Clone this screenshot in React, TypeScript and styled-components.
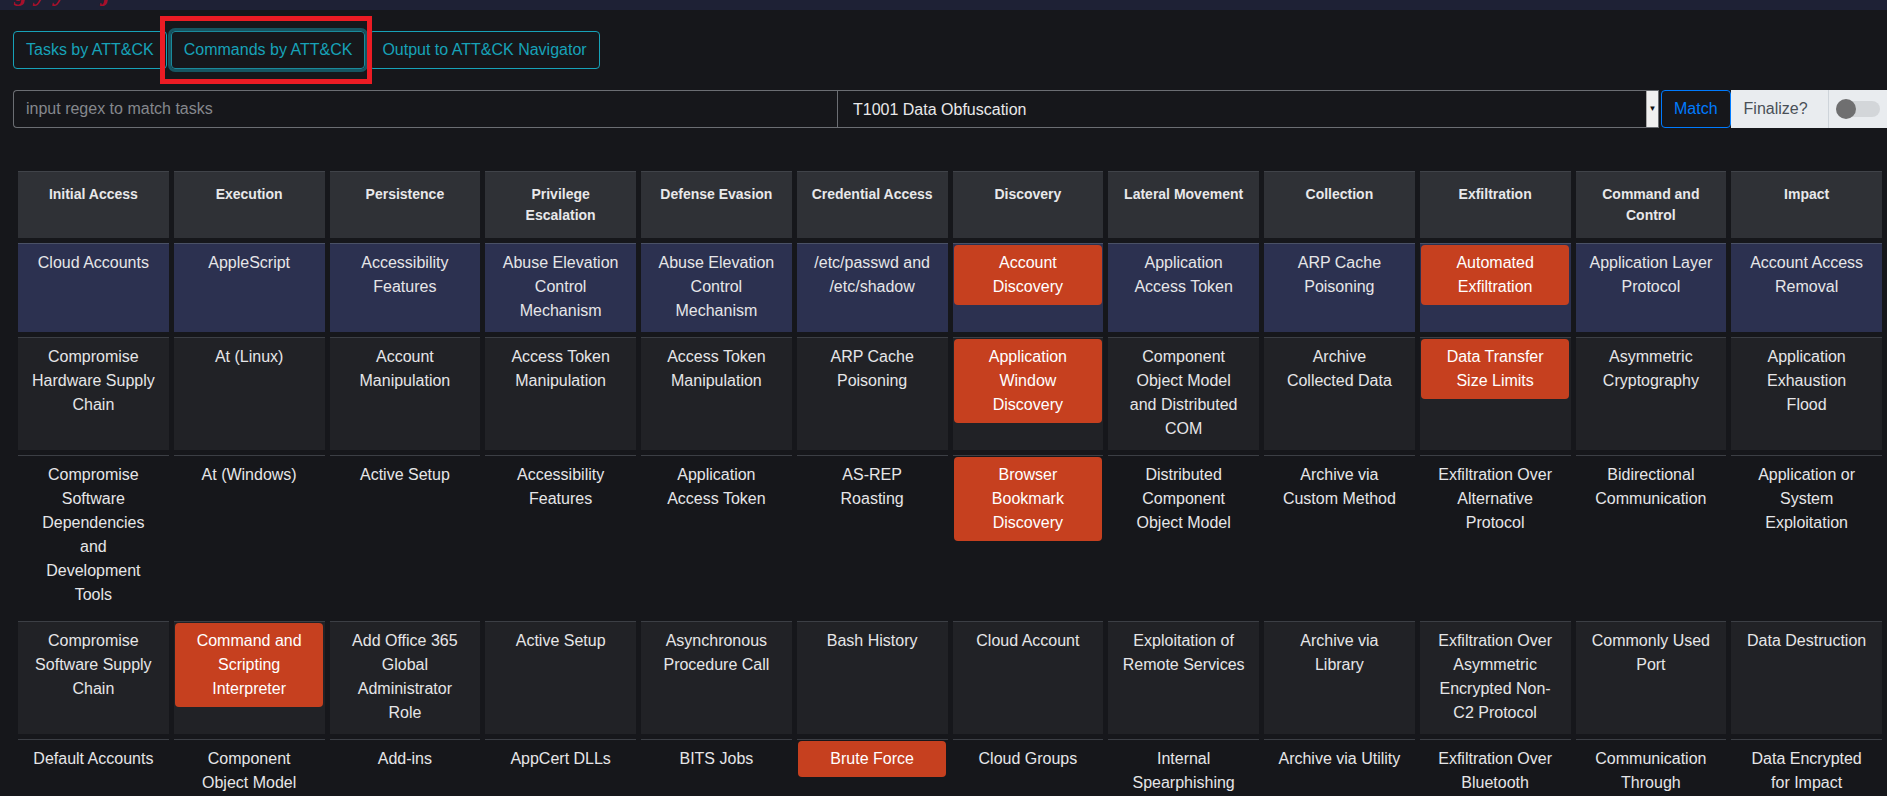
import React from "react";
import styled, { createGlobalStyle } from "styled-components";

const GlobalStyle = createGlobalStyle`
  html, body {
    margin: 0;
    padding: 0;
    background: #16171b;
    overflow: hidden;
  }
  body {
    font-family: "Liberation Sans", Arial, sans-serif;
    font-size: 16px;
    line-height: 1.5;
    color: #e6e6e8;
  }
  * { box-sizing: border-box; }
`;

const TopBar = styled.header`
  height: 10px;
  background: #1e2135;
  overflow: hidden;
  padding-left: 14px;
`;

const Logo = styled.div`
  font-family: "Liberation Serif", serif;
  font-style: italic;
  font-weight: bold;
  font-size: 26px;
  line-height: 26px;
  color: #a80f2a;
  letter-spacing: 8px;
  margin-top: -20px;
  white-space: nowrap;
`;

const Page = styled.main`
  padding-left: 13px;
`;

const ButtonRow = styled.div`
  position: relative;
  display: flex;
  gap: 4px;
  margin-top: 21px;
`;

const TabButton = styled.button<{ $active?: boolean }>`
  font-family: "Liberation Sans", Arial, sans-serif;
  font-size: 16px;
  line-height: 24px;
  padding: 6px 12px;
  color: #17a2b8;
  background: transparent;
  border: 1px solid ${(p) => (p.$active ? "#1a8a9b" : "#17a2b8")};
  border-radius: 4px;
  box-shadow: ${(p) => (p.$active ? "0 0 0 3px rgba(23,162,184,0.45)" : "none")};
  cursor: pointer;
`;

const Annotation = styled.div`
  position: absolute;
  left: 147px;
  top: -15px;
  width: 212px;
  height: 68px;
  border: 5px solid #ec1c24;
  pointer-events: none;
`;

const SearchGroup = styled.div`
  display: flex;
  align-items: stretch;
  height: 38px;
  margin-top: 21px;
`;

const RegexInput = styled.input`
  flex: 0 0 824px;
  font-family: "Liberation Sans", Arial, sans-serif;
  font-size: 16px;
  padding: 0 12px;
  color: #e6e6e8;
  background: #16171b;
  border: 1px solid #6b6e73;
  border-right: none;
  border-radius: 4px 0 0 4px;
  outline: none;
  &::placeholder { color: #85888d; }
`;

const SelectWrap = styled.div`
  flex: 0 0 822px;
  display: flex;
  border: 1px solid #6b6e73;
`;

const SelectField = styled.select`
  flex: 1;
  appearance: none;
  font-family: "Liberation Sans", Arial, sans-serif;
  font-size: 16px;
  padding: 0 15px;
  color: #e9e9ea;
  background: #16171b;
  border: none;
  outline: none;
`;

const SelectArrow = styled.div`
  width: 12px;
  display: flex;
  align-items: center;
  justify-content: center;
  background: #f0f0f0;
  border-left: 1px solid #a9a9a9;
  color: #111;
  font-size: 8px;
  line-height: 1;
`;

const MatchButton = styled.button`
  margin-left: 2px;
  font-family: "Liberation Sans", Arial, sans-serif;
  font-size: 16px;
  padding: 0 12px;
  color: #007bff;
  background: #16171b;
  border: 1px solid #007bff;
  border-radius: 4px;
  cursor: pointer;
`;

const AddonText = styled.div`
  display: flex;
  align-items: center;
  width: 98px;
  padding-left: 13px;
  background: #e9ecef;
  color: #495057;
  font-size: 16px;
  border-right: 1px solid #ced4da;
`;

const ToggleBox = styled.div`
  flex: 1;
  display: flex;
  align-items: center;
  padding-left: 7px;
  background: #e9ecef;
`;

const ToggleTrack = styled.div`
  width: 44px;
  height: 16px;
  border-radius: 8px;
  background: #d3d6d9;
  display: flex;
  align-items: center;
`;

const ToggleKnob = styled.div`
  width: 20px;
  height: 20px;
  border-radius: 50%;
  background: #6f6f70;
  margin: -2px 0;
`;

const Matrix = styled.table`
  width: 100%;
  table-layout: fixed;
  border-collapse: separate;
  border-spacing: 5px;
  margin-top: 38px;
`;

const HeadCell = styled.th`
  background: #2f3136;
  border-top: 1px solid #404349;
  padding: 12px;
  font-size: 14px;
  line-height: 21px;
  font-weight: bold;
  color: #e8e8ea;
  text-align: center;
  vertical-align: top;
`;

const BodyRow = styled.tr<{ $tone: "blue" | "gray" | "plain" }>`
  & > td {
    background: ${(p) =>
      p.$tone === "blue" ? "#2c3150" : p.$tone === "gray" ? "#212226" : "transparent"};
    border-top: 1px solid ${(p) => (p.$tone === "blue" ? "#4a5166" : "#3c3f45")};
  }
`;

const Cell = styled.td`
  padding: 1px 1.7px 3px;
  vertical-align: top;
  text-align: center;
`;

const Technique = styled.div<{ $hit?: boolean }>`
  padding: 6px 12px;
  font-size: 16px;
  line-height: 24px;
  color: ${(p) => (p.$hit ? "#ffffff" : "#e6e6e8")};
  background: ${(p) => (p.$hit ? "#c6401f" : "transparent")};
  border-radius: 4px;
`;

const tactics = [
  "Initial Access",
  "Execution",
  "Persistence",
  "Privilege Escalation",
  "Defense Evasion",
  "Credential Access",
  "Discovery",
  "Lateral Movement",
  "Collection",
  "Exfiltration",
  "Command and Control",
  "Impact",
];

type Row = { tone: "blue" | "gray" | "plain"; cells: string[]; hits: number[] };

const rows: Row[] = [
  {
    tone: "blue",
    hits: [6, 9],
    cells: [
      "Cloud Accounts",
      "AppleScript",
      "Accessibility Features",
      "Abuse Elevation Control Mechanism",
      "Abuse Elevation Control Mechanism",
      "/etc/passwd and /etc/shadow",
      "Account Discovery",
      "Application Access Token",
      "ARP Cache Poisoning",
      "Automated Exfiltration",
      "Application Layer Protocol",
      "Account Access Removal",
    ],
  },
  {
    tone: "gray",
    hits: [6, 9],
    cells: [
      "Compromise Hardware Supply Chain",
      "At (Linux)",
      "Account Manipulation",
      "Access Token Manipulation",
      "Access Token Manipulation",
      "ARP Cache Poisoning",
      "Application Window Discovery",
      "Component Object Model and Distributed COM",
      "Archive Collected Data",
      "Data Transfer Size Limits",
      "Asymmetric Cryptography",
      "Application Exhaustion Flood",
    ],
  },
  {
    tone: "plain",
    hits: [6],
    cells: [
      "Compromise Software Dependencies and Development Tools",
      "At (Windows)",
      "Active Setup",
      "Accessibility Features",
      "Application Access Token",
      "AS-REP Roasting",
      "Browser Bookmark Discovery",
      "Distributed Component Object Model",
      "Archive via Custom Method",
      "Exfiltration Over Alternative Protocol",
      "Bidirectional Communication",
      "Application or System Exploitation",
    ],
  },
  {
    tone: "gray",
    hits: [1],
    cells: [
      "Compromise Software Supply Chain",
      "Command and Scripting Interpreter",
      "Add Office 365 Global Administrator Role",
      "Active Setup",
      "Asynchronous Procedure Call",
      "Bash History",
      "Cloud Account",
      "Exploitation of Remote Services",
      "Archive via Library",
      "Exfiltration Over Asymmetric Encrypted Non-C2 Protocol",
      "Commonly Used Port",
      "Data Destruction",
    ],
  },
  {
    tone: "plain",
    hits: [5],
    cells: [
      "Default Accounts",
      "Component Object Model",
      "Add-ins",
      "AppCert DLLs",
      "BITS Jobs",
      "Brute Force",
      "Cloud Groups",
      "Internal Spearphishing",
      "Archive via Utility",
      "Exfiltration Over Bluetooth",
      "Communication Through Removable Media",
      "Data Encrypted for Impact",
    ],
  },
];

export default function App() {
  return (
    <>
      <GlobalStyle />
      <TopBar>
        <Logo>gyy&nbsp;&nbsp;j</Logo>
      </TopBar>
      <Page>
        <ButtonRow>
          <TabButton>Tasks by ATT&amp;CK</TabButton>
          <TabButton $active>Commands by ATT&amp;CK</TabButton>
          <TabButton>Output to ATT&amp;CK Navigator</TabButton>
          <Annotation />
        </ButtonRow>
        <SearchGroup>
          <RegexInput placeholder="input regex to match tasks" />
          <SelectWrap>
            <SelectField defaultValue="T1001">
              <option value="T1001">T1001 Data Obfuscation</option>
            </SelectField>
            <SelectArrow>▼</SelectArrow>
          </SelectWrap>
          <MatchButton>Match</MatchButton>
          <AddonText>Finalize?</AddonText>
          <ToggleBox>
            <ToggleTrack>
              <ToggleKnob />
            </ToggleTrack>
          </ToggleBox>
        </SearchGroup>
        <Matrix>
          <thead>
            <tr>
              {tactics.map((t) => (
                <HeadCell key={t}>{t}</HeadCell>
              ))}
            </tr>
          </thead>
          <tbody>
            {rows.map((r, ri) => (
              <BodyRow key={ri} $tone={r.tone}>
                {r.cells.map((c, ci) => (
                  <Cell key={ci}>
                    <Technique $hit={r.hits.includes(ci)}>{c}</Technique>
                  </Cell>
                ))}
              </BodyRow>
            ))}
          </tbody>
        </Matrix>
      </Page>
    </>
  );
}
